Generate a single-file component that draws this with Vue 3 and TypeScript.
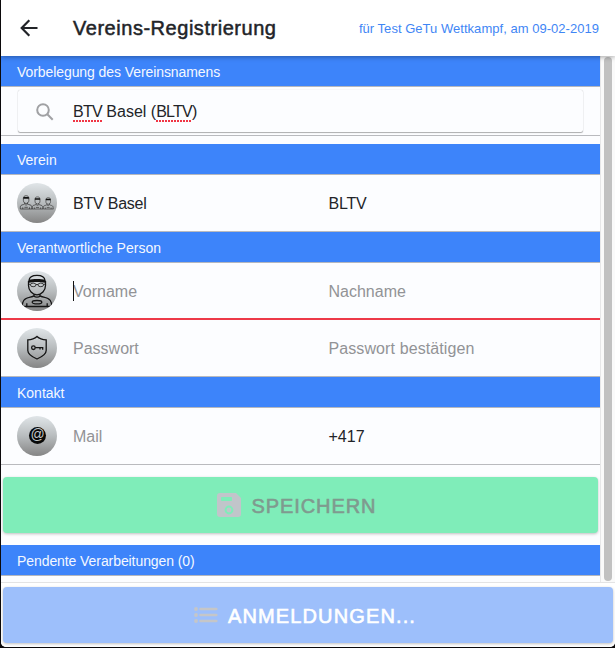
<script setup lang="ts">
import { ref } from 'vue'

const club = ref('BTV Basel')
const association = ref('BLTV')
const phone = ref('+417')
const pending = ref<string[]>([])
</script>

<template>
  <div class="page">
    <header class="header">
      <svg class="back" viewBox="0 0 18 18"><path d="M17.500 9H2M9.300 1.200 1.700 9l7.600 7.800" /></svg>
      <h1>Vereins-Registrierung</h1>
      <span class="event">für Test GeTu Wettkampf, am 09-02-2019</span>
    </header>

    <main class="content">
      <div class="list">
        <div class="divider tight">Vorbelegung des Vereinsnamens</div>
        <div class="search-item">
          <div class="search">
            <svg class="glass" viewBox="0 0 18 18"><circle cx="7" cy="7" r="5.8" /><path d="m11.3 11.3 5.4 5.4" /></svg>
            <span class="query"><span class="typo">BTV</span> Basel (<span class="typo">BLTV</span>)</span>
          </div>
        </div>

        <div class="divider">Verein</div>
        <div class="item">
          <div class="avatar">
            <svg viewBox="0 0 40 40" class="team">
              <g v-for="(t, i) in ['translate(3 12.4) scale(.34)', 'translate(14.9 13.6) scale(.31)', 'translate(26 14.4) scale(.29)']" :key="i" :transform="t">
                <path d="M10 8v7c0 5 4 9 8 9s8-4 8-9V8M10 9c0-6 3-8 8-8s8 2 8 8M1 40v-5c0-5 3-7 9-8l4-2v-4M35 40v-5c0-5-3-7-9-8l-4-2v-4M14 26c2 3 6 3 8 0M8 40v-5M28 40v-5M13 35h10" />
                <path class="band" d="M10 5h16v5H10z" /><path d="M1 40h35" />
              </g>
            </svg>
          </div>
          <div class="field dark caps">{{ club }}</div>
          <div class="field dark caps">{{ association }}</div>
        </div>

        <div class="divider">Verantwortliche Person</div>
        <div class="item invalid">
          <div class="avatar">
            <svg viewBox="0 0 40 40" class="person">
              <path d="M11.500 10v4.500c0 5 4 9.300 8.500 9.300s8.500-4.300 8.500-9.300V10M12 9.500C12.300 6 15 4.300 20 4.300s7.700 1.700 8 5.200M17 23.500v1.400c-2.500 1.600-8 1.100-10.300 4.600-.9 1.400-1.300 3-1.500 5.500M23 23.500v1.400c2.500 1.600 8 1.100 10.300 4.600.9 1.400 1.300 3 1.500 5.500M5 35.500h30M9.800 35.500v-3.300M30.200 35.500v-3.300" />
              <path d="M17 25.300c1.500 1.200 4.500 1.200 6 0" />
              <g class="thin"><ellipse cx="16.200" cy="13.900" rx="2.800" ry="1.800" /><ellipse cx="23.800" cy="13.900" rx="2.800" ry="1.800" /><path d="M11.500 13.300h2M26.500 13.300h2M19 13.500h2" /></g>
              <ellipse cx="20" cy="31.200" rx="4.800" ry="1.700" />
              <path class="band" d="M11.500 9c5-1.200 12-1.200 17 0v2.700c-5-1-12-1-17 0z" />
            </svg>
          </div>
          <div class="field"><i class="caret"></i>Vorname</div>
          <div class="field">Nachname</div>
        </div>
        <div class="item">
          <div class="avatar">
            <svg viewBox="0 0 40 40" class="shield">
              <path d="M20 8.500c-2.500 2.400-6 3.300-9.200 3.300v10.700c0 4 4 6.200 9.200 8.500 5.200-2.300 9.200-4.500 9.200-8.500V11.800c-3.200 0-6.700-.900-9.200-3.300z" />
              <circle cx="16.400" cy="19.700" r="1.800" /><path d="M18.200 19.700h7.500v2M23 19.700v1.700" />
            </svg>
          </div>
          <div class="field">Passwort</div>
          <div class="field wide">Passwort bestätigen</div>
        </div>

        <div class="divider">Kontakt</div>
        <div class="item">
          <div class="avatar at"><span>@</span></div>
          <div class="field">Mail</div>
          <div class="field dark">{{ phone }}</div>
        </div>

        <button class="button save" disabled>
          <svg class="disk" viewBox="0 0 24 24">
            <path class="body" d="M3 0h16l5 5v16a3 3 0 0 1-3 3H3a3 3 0 0 1-3-3V3a3 3 0 0 1 3-3z" />
            <rect class="slot" x="4" y="4" width="11" height="4" rx=".8" />
            <circle class="hub" cx="12" cy="17" r="3.4" />
          </svg>
          <span>SPEICHERN</span>
        </button>

        <div class="divider tight">Pendente Verarbeitungen ({{ pending.length }})</div>
      </div>
      <div class="scrollbar"><div class="thumb"></div></div>
    </main>

    <footer class="footer">
      <button class="button entries" disabled>
        <svg class="lines" viewBox="0 0 24 16"><path d="M6.500 2h15.800M6.500 8h15.800M6.500 14h15.800" /><path class="dots" d="M2 2h.01M2 8h.01M2 14h.01" /></svg>
        <span>ANMELDUNGEN...</span>
      </button>
    </footer>
  </div>
</template>

<style>
body { background: #0b090b; }
</style>

<style scoped>
.page {
  box-sizing: border-box;
  width: 614px;
  height: 647px;
  margin-left: 1px;
  display: flex;
  flex-direction: column;
  background: #fcfdff;
  border-radius: 0 0 5px 5px;
  overflow: hidden;
  font-family: "Liberation Sans", Arial, sans-serif;
  color: #222428;
}
.header {
  height: 56px;
  flex: none;
  display: flex;
  align-items: center;
  box-sizing: border-box;
  padding: 0 15px 0 19px;
  background: #fff;
  box-shadow: 0 1px 5px rgba(0, 0, 0, .35);
  z-index: 1;
}
.back { width: 18px; height: 18px; fill: none; stroke: #222428; stroke-width: 2.2; }
h1 {
  margin: 0 auto 0 35px;
  font-size: 20px;
  font-weight: 400;
  letter-spacing: .53px;
  -webkit-text-stroke: .5px #222428;
}
.event { font-size: 13px; letter-spacing: .03px; margin-right: 1px; color: #3f86f5; }
.content { flex: 1; min-height: 0; display: flex; }
.list { width: 599px; }
.divider {
  height: 31px;
  box-sizing: border-box;
  padding: 1px 16px 0;
  border-bottom: 1px solid #b4b7be;
  background: #3d84fa;
  color: #f4f8ff;
  font-size: 14px;
  line-height: 30px;
}
.tight { letter-spacing: -.08px; }
.search-item {
  height: 49px;
  box-sizing: border-box;
  padding: 3px 17px 0;
  border-bottom: 1px solid #b9babe;
  margin-bottom: 8px;
}
.search {
  height: 42px;
  box-sizing: border-box;
  padding: 1px 0 0 18px;
  border-radius: 2px;
  box-shadow: 0 1px 1px rgba(0, 0, 0, .3), 0 0 1px rgba(0, 0, 0, .25);
  display: flex;
  align-items: center;
}
.glass { width: 18px; height: 18px; fill: none; stroke: #a0a1a4; stroke-width: 2; }
.query { margin-left: 19px; font-size: 16px; }
.typo {
  letter-spacing: -.75px;
  padding-bottom: 2px;
  background: repeating-linear-gradient(90deg, #f03645 0 2px, transparent 2px 3px) 0 100% / 100% 2px no-repeat;
}
.item {
  height: 57px;
  box-sizing: border-box;
  padding: 0 16px;
  border-bottom: 1px solid #b9babe;
  display: flex;
  align-items: center;
}
.invalid { border-bottom: 2px solid #ed3948; }
.avatar {
  width: 40px;
  height: 40px;
  flex: none;
  margin-right: 16px;
  border-radius: 50%;
  overflow: hidden;
  background: linear-gradient(#e0e5e8, #b8bcbe 50%, #858585);
}
.avatar svg { display: block; fill: none; stroke: #141414; stroke-width: 1.3; }
.avatar .band { fill: #111; stroke: none; }
.avatar .team { stroke: #3b3b3b; }
.team g { stroke-width: 2.3; }
.person .thin { stroke-width: .8; }
.at { display: flex; align-items: center; justify-content: center; }
.at span {
  width: 17px;
  height: 17px;
  margin-bottom: 1px;
  border-radius: 50%;
  background: #080808;
  color: #c5c9cb;
  font-size: 14px;
  line-height: 15px;
  text-align: center;
  text-indent: 1px;
}
.field { flex: 1; padding-top: 2px; font-size: 16px; line-height: 24px; color: #929396; position: relative; }
.dark { color: #222428; }
.caps { letter-spacing: -.22px; }
.wide { letter-spacing: .1px; }
.caret { position: absolute; left: 0; top: 3px; width: 1px; height: 20px; background: #111; }
.button {
  height: 56px;
  width: 100%;
  border: 0;
  border-radius: 4px;
  display: flex;
  align-items: center;
  justify-content: center;
  font: 400 20px "Liberation Sans", Arial, sans-serif;
}
.button span { padding-top: 2px; }
.save {
  width: 595px;
  margin: 12px 2px;
  padding: 0 13px 0 5px;
  background: #7fedb9;
  color: #7f9a8f;
  letter-spacing: .9px;
  -webkit-text-stroke: .6px #7f9a8f;
  box-shadow: 0 1px 3px rgba(0, 0, 0, .25);
}
.disk { width: 24px; height: 24px; margin-right: 11px; }
.disk .body { fill: #c1c5ca; }
.disk .slot { fill: #7fedb9; }
.disk .hub { fill: none; stroke: #7fedb9; stroke-width: 2; }
.scrollbar {
  flex: 1;
  box-sizing: border-box;
  border-left: 1px solid #e7e7e8;
  background: #fafafa;
  padding: 1px 3px;
}
.thumb { width: 8px; height: 524px; border-radius: 4px; background: #c1c1c1; }
.footer {
  height: 65px;
  flex: none;
  box-sizing: border-box;
  padding: 4px 2px;
  background: #fff;
  border-top: 1px solid #e3e3e4;
  z-index: 1;
}
.entries {
  width: 610px;
  padding: 0 12px 0 6px;
  background: #9dbffb;
  color: #fff;
  letter-spacing: 1.13px;
  -webkit-text-stroke: .6px #fff;
  box-shadow: 0 1px 3px rgba(0, 0, 0, .25);
}
.lines { width: 24px; height: 16px; margin-right: 10px; fill: none; stroke: #c5c6c8; stroke-width: 2.6; stroke-linecap: round; }
.lines .dots { stroke-width: 3.8; }
</style>
